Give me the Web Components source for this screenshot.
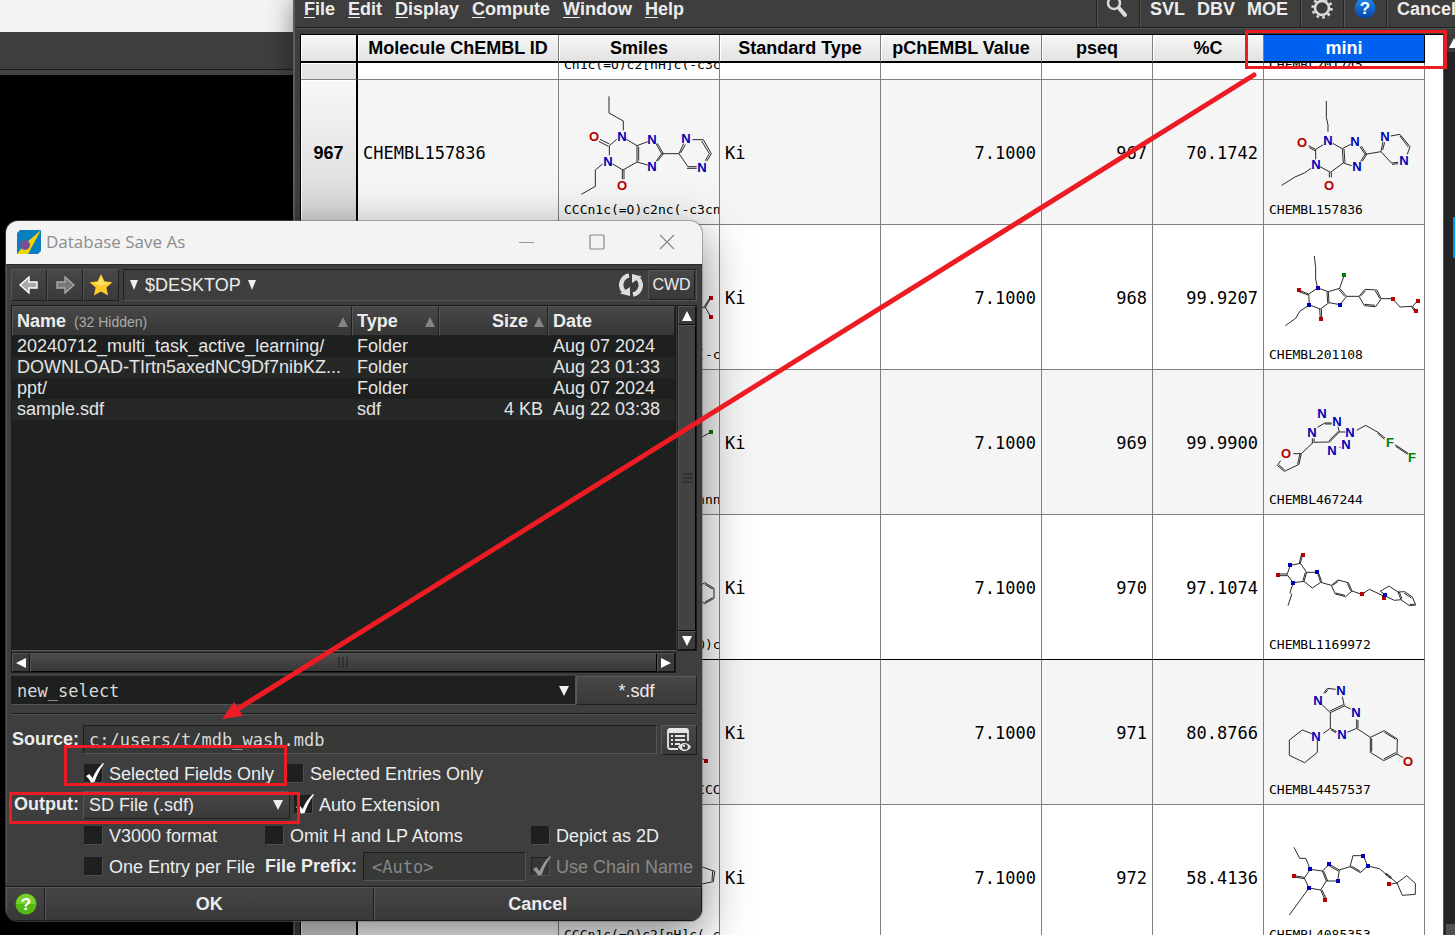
<!DOCTYPE html>
<html lang="en">
<head>
<meta charset="utf-8">
<title>Database Viewer</title>
<style>
  html, body { height: 100%; margin: 0; }
  body { overflow: hidden; background: #000; font-family: "Liberation Sans", Arial, sans-serif; font-size: 18px; }
</style>
</head>
<body>
<moe-desktop>
  <back-window></back-window>
  <moe-window>
    <menu-bar slot="menu"></menu-bar>
    <chem-table></chem-table>
  </moe-window>
  <save-dialog heading="Database Save As">
    <file-list></file-list>
    <save-form slot="form"></save-form>
  </save-dialog>
  <mark-layer></mark-layer>
</moe-desktop>

<script>
const define = (name, html, setup) => {
  const tpl = document.createElement('template');
  tpl.innerHTML = html;
  customElements.define(name, class extends HTMLElement {
    connectedCallback() {
      if (this.shadowRoot) return;
      const root = this.attachShadow({ mode: 'open' });
      root.append(tpl.content.cloneNode(true));
      if (setup) setup(root, this);
    }
  });
};

/* ---------- molecule drawings: bonds and atoms in thirds of a pixel ---------- */
const MOLS = {
  s967: { o: [12, 60],
    b: 'M162 109V159L205 183V211M185 238L163 257V286M135 238L163 252M131 244L160 259M143 312L121 330V379L79 403M173 312L204 330L246 306V257L214 238M251 302V260M202 330V358M207 330V358M246 257L278 245M303 251L320 281L303 304M307 250L325 281L308 303M278 315L246 306M320 281H372L386 251M377 279L391 254M412 239H445L469 281L455 304M440 243L463 281L451 302M425 320H399L372 281M425 325H396',
    a: 'O118,229 N200,228 N158,303 O202,376 N291,237 N291,318 N393,235 N441,321' },
  m967: { o: [642, 240],
    b: 'M829 303V352L834 375V395M775 437L797 448L820 434M778 443L797 453M797 448V478M783 505L763 519L735 531L695 556M810 500L841 517L880 489L877 446L848 430M882 447L885 488M838 517V532M844 517V532M877 446L902 433M930 440L945 463L932 484M934 438L950 463L937 484M905 497L880 489M945 463L993 455L999 425M998 450L1004 427M1022 408L1050 403L1080 440L1072 463M1050 408L1075 441M1044 487L1024 489L993 455M1044 491L1026 493',
    a: 'O757,427 N834,421 N798,492 O838,556 N915,423 N921,499 N1005,408 N1063,481' },
  m968: { o: [12, -15],
    b: 'M163 78L167 113V148L173 174L205 185M117 181L146 192L173 174M117 185L144 195M146 192L148 225L181 237L207 218L205 185L239 175L260 199L240 224L207 218M203 218L201 186M237 179L255 200M239 175L253 134M179 237L181 266M184 237L185 266M148 225L119 244L107 265L76 287M260 199H297L315 178L350 180L364 206L347 230L313 227L297 199M301 199L317 182M346 183L360 206M345 226L314 223M364 206H398L420 231L458 229L473 212M458 229L469 243M455 231L465 245',
    a: 'b173,174 r117,181 b148,225 b240,225 g253,134 r183,266 r398,206 r473,212 r469,243' },
  m969: { o: [12, 420],
    b: 'M172 592L195 579H215M195 582H215M157 625V640M162 625V637L209 636L238 606L234 590M207 633L235 604M238 606H256M238 652h3M290 601L317 586L354 607L375 624M352 609L373 628M405 644L445 670M407 649L443 673M160 637L124 671H100M124 671L117 703L73 724L52 706L62 692M120 671L113 702M74 720L57 705',
    a: 'N186,549 N231,573 N156,607 N270,607 N258,643 N216,659 O79,670 F389,636 F457,682' },
  m970: { o: [12, -15],
    b: 'M91 136L121 130L128 104M118 129L124 104M121 130L140 157H172L182 187L157 204L132 184L140 157M136 157L129 182M176 160L185 185M132 184L100 188L81 164L91 136M81 162H54M81 167H54M100 188L90 217L95 224L84 257M182 187L214 196L234 180L265 188L276 213L257 230L226 222L214 196M218 196L235 184M262 190L272 212M255 226L227 219M276 213L305 223L328 208L371 228M376 224L361 214L387 198L414 216L423 239L403 241L376 228M414 216L434 215L457 231L467 255L448 257L423 239M432 219L454 234M449 253H464M418 216L426 236',
    a: 'b91,136 r128,104 b172,157 r54,166 b100,188 r305,223 r371,234 b376,224' },
  m971: { o: [12, 420],
    b: 'M227 508L202 505L191 520M204 509L195 520M187 555L211 578L253 558L247 530M210 573L250 554M253 558L272 567M211 578V625L190 640M211 625L230 635M213 630L228 638M262 637L290 625V598M294 625V600M290 625L331 652L373 632L412 657L411 702L371 722L331 697V652M335 655V695M373 637L408 658M407 698L371 717M411 702L430 713M155 641L127 630L88 660V706L134 728L172 697V663',
    a: 'N244,511 N175,541 N288,577 N246,643 N169,648 O445,724' },
  m972: { o: [12, 15],
    b: 'M102 142L119 175H137L151 208L187 213L208 193L238 210L233 243H199L187 213M191 213L203 243M208 198L235 213M199 243L182 270L147 264L133 234L151 208M133 232L102 227M133 236L102 231M182 270L195 299M186 270L199 297M147 264L88 345M238 210L270 200L279 167H310L323 198L301 218L270 200M274 198L301 214M323 198L358 206L411 249L386 253M378 220L395 232M375 222L392 236M411 249L440 227L466 250V283L427 286L411 249',
    a: 'b151,208 b208,193 b233,243 b147,264 r102,229 r195,299 b310,167 b323,198 r386,253' },
  s968: { o: [-303, -105], b: 'M110 142H136L153 113M136 142L153 172M133 140L150 113', a: 'r153,113 r153,172' },
  s969: { o: [-303, 330], b: 'M110 540L153 516', a: 'g153,516' },
  s970: { o: [-303, 765], b: 'M110 985L134 968L162 985V1015L134 1031L110 1015M134 973L158 987M158 1013L134 1027', a: '' },
  s971: { o: [627, 90], b: 'M1040 378L1067 391', a: 'r1068,393' },
  s972: { o: [627, 525], b: 'M1040 712L1060 712L1094 724L1090 755L1055 762L1040 750M1088 724L1086 753', a: '' }
};
const COLOR = { N: '#0000b4', O: '#b40000', F: '#008000', b: '#0000b4', r: '#b40000', g: '#008000' };

define('mol-figure', `
<style>
  :host { display: block; width: 160px; height: 144px; }
  svg { display: block; }
  path { fill: none; stroke: #2a2a2a; stroke-width: 3; }
  text { font: bold 13px "Liberation Sans", Arial, sans-serif; text-anchor: middle; }
</style>
<svg width="160" height="144" aria-hidden="true"></svg>`, (root, el) => {
  const m = MOLS[el.getAttribute('name')];
  if (!m) return;
  const [ox, oy] = m.o;
  let out = `<g transform="scale(.33333) translate(${-ox} ${-oy})"><path d="${m.b}"/></g>`;
  for (const t of m.a.split(' ').filter(Boolean)) {
    const k = t[0], [x, y] = t.slice(1).split(',').map(Number);
    const px = Math.round((x - ox) / 3), py = Math.round((y - oy) / 3);
    out += k < 'a'
      ? `<text x="${px}" y="${py + 5}" fill="${COLOR[k]}">${k}</text>`
      : `<rect x="${px - 2}" y="${py - 2}" width="4" height="4" fill="${COLOR[k]}"/>`;
  }
  root.querySelector('svg').innerHTML = out;
});

/* ---------- desktop and windows ---------- */
define('moe-desktop', `
<style>
  :host { display: block; position: relative; width: 100%; height: 100vh; overflow: hidden; background: #000; }
</style><slot></slot>`);

define('back-window', `
<style>
  :host { display: block; width: 100%; }
  .cap { height: 32px; background: #f3f3f3; }
  .bar { height: 37px; background: #3e3e3e; border-bottom: 1px solid #1d1d1d; }
  .gap { height: 5px; background: #444; }
</style><div class="cap"></div><div class="bar"></div><div class="gap"></div>`);

define('moe-window', `
<style>
  :host { position: absolute; left: 293px; right: 0; top: 0; bottom: 0; display: flex; flex-direction: column;
    background: #3e3e3e; border-left: 2px solid #5c5c5c; box-shadow: 0 0 24px rgba(0,0,0,.45); }
  .body { flex: 1; min-height: 0; display: flex; padding: 5px 0 0 5px; }
  .frame { flex: 1; min-width: 0; overflow: hidden; background: #fff; border: solid #000; border-width: 1px 0 0 1px; }
  .scroll { width: 12px; background: #242424; overflow: hidden; border-left: 1px solid #555; box-sizing: border-box; display: flex; flex-direction: column; }
  .up { height: 18px; background: #3a3a3a; }
  .thumb { height: 41px; width: 2px; background: #0090f0; margin: 165px 0 auto auto; }
  .down { height: 11px; background: #505050; margin-left: 2px; }
  svg { display: block; }
</style>
<slot name="menu"></slot>
<div class="body"><div class="frame"><slot></slot></div>
<div class="scroll"><div class="up"><svg width="16" height="18"><path d="M5 14L10 4l5 10z" fill="#fff"/></svg></div><div class="thumb"></div><div class="down"></div></div></div>`);

define('menu-bar', `
<style>
  :host { display: flex; height: 27px; border-bottom: 1px solid #1d1d1d; box-shadow: 0 1px #555; margin-bottom: 1px;
    background: #3e3e3e; font-weight: bold; line-height: 18px; overflow: hidden; white-space: nowrap; }
  nav { display: flex; gap: 13px; padding-left: 9px; flex: 1; }
  a { color: #ececec; text-decoration: none; }
  u { text-underline-offset: 2px; text-decoration-thickness: 1px; }
  .cell { display: flex; align-items: flex-start; gap: 12px; padding: 0 11px 0 10px; border-left: 1px solid #222; box-shadow: inset 1px 0 #555; }
  .icon { padding: 0; width: 43px; justify-content: center; box-sizing: border-box; }
  .last { width: 69px; box-sizing: border-box; padding: 0 0 0 10px; overflow: hidden; }
  .cell + .cell:not(.icon):not(.last) { padding-right: 12px; }
  button { all: unset; color: #ececec; }
  svg { display: block; }
</style>
<nav><a href="#file"><u>F</u>ile</a><a href="#edit"><u>E</u>dit</a><a href="#display"><u>D</u>isplay</a><a href="#compute"><u>C</u>ompute</a><a href="#window"><u>W</u>indow</a><a href="#help"><u>H</u>elp</a></nav>
<div class="cell icon"><button aria-label="Search"><svg width="24" height="20" viewBox="0 0 24 20"><circle cx="8" cy="3" r="6" fill="none" stroke="#ddd" stroke-width="2.4"/><path d="M13 8l6 7" stroke="#ddd" stroke-width="4" stroke-linecap="round"/></svg></button></div>
<div class="cell"><button>SVL</button><button>DBV</button><button>MOE</button></div>
<div class="cell icon"><button aria-label="Settings"><svg width="24" height="20" viewBox="0 0 24 20"><circle cx="12" cy="8" r="7" fill="none" stroke="#ddd" stroke-width="2.6"/><circle cx="12" cy="8" r="9.4" fill="none" stroke="#ddd" stroke-width="2.6" stroke-dasharray="2.6 3.3"/></svg></button></div>
<div class="cell icon"><button aria-label="Help"><svg width="22" height="20" viewBox="0 0 22 20"><defs><linearGradient id="g" x2="0" y2="1"><stop stop-color="#1d8df0"/><stop offset="1" stop-color="#0544a8"/></linearGradient></defs><circle cx="11" cy="8" r="10.4" fill="url(#g)"/><text x="11" y="14" text-anchor="middle" fill="#fff" font-size="17">?</text></svg></button></div>
<div class="cell last"><button>Cancel</button></div>`);

/* ---------- database table ---------- */
const ROWS = [
  ['', '', '', 'Cn1c(=O)c2[nH]c(-c3ccc', '', '', '', '', 'CHEMBL201745', ''],
  [967, 'CHEMBL157836', 's967', 'CCCn1c(=O)c2nc(-c3cnccn3)', 'Ki', '7.1000', '967', '70.1742', 'CHEMBL157836', 'm967'],
  [968, 'CHEMBL201108', 's968', 'CCCn1c(=O)c2[nH]c(-c3ccc', 'Ki', '7.1000', '968', '99.9207', 'CHEMBL201108', 'm968'],
  [969, 'CHEMBL467244', 's969', 'Nc1nc(-c2ccco2)c2nnnn2CC', 'Ki', '7.1000', '969', '99.9900', 'CHEMBL467244', 'm969'],
  [970, 'CHEMBL1169972', 's970', 'CCCn1c(=O)[nH]c(=O)c2c1', 'Ki', '7.1000', '970', '97.1074', 'CHEMBL1169972', 'm970'],
  [971, 'CHEMBL4457537', 's971', 'Oc1ccc(-c2nc(N3CCCCC3)c3', 'Ki', '7.1000', '971', '80.8766', 'CHEMBL4457537', 'm971'],
  [972, 'CHEMBL4085353', 's972', 'CCCn1c(=O)c2[nH]c(-c3cn', 'Ki', '7.1000', '972', '58.4136', 'CHEMBL4085353', 'm972']
];
define('chem-table', `
<style>
  :host { display: block; color: #000; }
  table { border-collapse: separate; border-spacing: 0; table-layout: fixed; width: 1124px; }
  th, td { padding: 0; border: 0 solid #808080; border-width: 0 1px 1px 0; box-sizing: border-box; overflow: hidden; white-space: nowrap; }
  thead th { height: 28px; line-height: 26px; padding-top: 1px; border-bottom: 2px solid #000; background: linear-gradient(#f7f7f7, #e2e2e2); box-shadow: inset 1px 1px #fff; }
  thead th { line-height: 25px; }
  thead th.sel { background: #0060f0; color: #fff; border-right-color: #000; box-shadow: none; }
  th:first-child { border-right: 2px solid #000; }
  tbody th { padding-top: 2px; background: linear-gradient(#f8f8f8, #d6d6d6); box-shadow: inset 1px 1px #fff; }
  tbody tr { height: 145px; }
  tbody tr.cut { height: 17px; }
  tbody tr.cut th { background: #e4e4e4; }
  tbody tr:nth-child(even) td { background: #f5f5f5; }
  tbody tr.group th ~ td { border-bottom-color: #000; }
  td { font: 17px/20px "DejaVu Sans Mono", monospace; padding: 1px 5px 0; }
  td.num { text-align: right; }
  td.mol { padding: 0; }
  .pic { display: grid; height: 144px; overflow: hidden; }
  .cut .pic { height: 16px; }
  .pic > * { grid-area: 1 / 1; }
  .pic span { align-self: end; padding: 0 0 7px 5px; font-size: 13px; line-height: 15px; overflow: hidden; }
  .cut .pic { display: flex; align-items: flex-end; }
</style>
<table>
  <colgroup><col style="width:57px"><col style="width:201px"><col style="width:161px"><col style="width:161px"><col style="width:161px"><col style="width:111px"><col style="width:111px"><col style="width:161px"></colgroup>
  <thead><tr><th></th><th>Molecule ChEMBL ID</th><th>Smiles</th><th>Standard Type</th><th>pChEMBL Value</th><th>pseq</th><th>%C</th><th class="sel">mini</th></tr></thead>
  <tbody></tbody>
</table>`, root => {
  const pic = (mol, text) => `<td class="mol"><div class="pic">${mol ? `<mol-figure name="${mol}"></mol-figure>` : ''}<span>${text}</span></div></td>`;
  root.querySelector('tbody').innerHTML = ROWS.map(r =>
    `<tr class="${r[0] ? (r[0] === 970 ? 'group' : '') : 'cut'}"><th>${r[0]}</th><td>${r[1]}</td>${pic(r[2], r[3])}<td>${r[4]}</td><td class="num">${r[5]}</td><td class="num">${r[6]}</td><td class="num">${r[7]}</td>${pic(r[9], r[8])}</tr>`).join('');
});

/* ---------- save dialog ---------- */
define('save-dialog', `
<style>
  :host { position: absolute; left: 6px; top: 221px; width: 696px; display: flex; flex-direction: column; box-sizing: border-box;
    border-radius: 12px; overflow: hidden; background: #3e3e3e; color: #ececec;
    box-shadow: 0 0 0 1px rgba(110,110,110,.5), 0 14px 48px rgba(0,0,0,.5); }
  header { height: 43px; display: flex; align-items: center; background: #f3f3f3; padding-left: 11px; }
  h1 { flex: 1; margin: 0 0 2px 5px; font: 17px/24px "Open Sans", sans-serif; color: #8c8c8c; }
  header button { all: unset; width: 70px; margin-bottom: 2px; display: grid; place-items: center; }
  header > svg { margin-bottom: 2px; }
  svg { display: block; }
  main { border-left: 1px solid #555; border-top: 1px solid #2a2a2a; padding: 4px 5px 0 4px; }
  .tools { display: flex; height: 32px; margin-bottom: 4px; }
  .tools > button, .cwd { all: unset; box-sizing: border-box; width: 36px; display: grid; place-items: center;
    background: linear-gradient(#474747, #3a3a3a); border: 1px solid; border-color: #555 #1f1f1f #1f1f1f #555; }
  .path { flex: 1; margin-left: 4px; display: flex; align-items: center; gap: 7px; padding: 0 1px 0 6px; border: 1px solid; border-color: #1f1f1f #555 #555 #1f1f1f; box-sizing: border-box; }
  .path i { flex: 1; }
  .path .cwd { width: 47px; height: 30px; font-size: 16px; margin-left: -2px; }
  footer { display: flex; height: 34px; border-top: 1px solid #1a1a1a; margin-top: 4px; }
  footer button { all: unset; box-sizing: border-box; flex: 1; text-align: center; font-weight: bold; line-height: 32px;
    background: linear-gradient(#454545, #383838); border: 1px solid; border-color: #5a5a5a #1a1a1a #1a1a1a #5a5a5a; }
  footer .help { flex: none; width: 39px; display: grid; place-items: center; }
</style>
<header>
  <svg width="24" height="24" viewBox="0 0 24 24"><path d="M3 0h21v21l-3 3H0V3z" fill="#0a7fc0"/><path d="M24 0L11 24H0l8-10z" fill="#f5d400"/><circle cx="8" cy="15" r="5" fill="#775099"/></svg>
  <h1></h1>
  <button aria-label="Minimize"><svg width="16" height="16"><path d="M0 8.500h15" stroke="#999"/></svg></button>
  <button aria-label="Maximize"><svg width="16" height="16"><rect x="1" y="1" width="14" height="14" rx="1" fill="none" stroke="#888" stroke-width="1.2"/></svg></button>
  <button aria-label="Close"><svg width="16" height="16"><path d="M1 1l14 14M15 1L1 15" stroke="#888" stroke-width="1.2"/></svg></button>
</header>
<main>
  <div class="tools">
    <button aria-label="Back"><svg width="20" height="18"><path d="M1 9l9-8v5h8v6h-8v5z" fill="#aaa" stroke="#fff" stroke-width="1.4"/></svg></button>
    <button aria-label="Forward"><svg width="20" height="18"><path d="M19 9l-9-8v5H2v6h8v5z" fill="#777" stroke="#aaa" stroke-width="1.4"/></svg></button>
    <button aria-label="Favorites"><svg width="24" height="24" viewBox="0 0 24 24"><path d="M12 1l3.400 7.300 8 .9-6 5.400 1.700 7.900L12 18.500l-7.100 4 1.700-7.900-6-5.400 8-.9z" fill="#ffc928"/><path d="M12 3l2.600 6.200 6.400.8-9 2.500-8.500-2.500 6-.8z" fill="#ffe169"/></svg></button>
    <div class="path"><svg width="8" height="10"><path d="M0 0h8L4 10z" fill="#eee"/></svg><span>$DESKTOP</span><svg width="8" height="10"><path d="M0 0h8L4 10z" fill="#eee"/></svg><i></i>
      <svg width="24" height="24" viewBox="0 0 24 24"><path d="M10 2.500A9.500 9.500 0 0 0 5 18.500M14 21.500A9.500 9.500 0 0 0 19 5.500" fill="none" stroke="#ddd" stroke-width="4.400"/><path d="M1 20.500l10 2.500V14zM23 3.500L13 1v9z" fill="#ddd"/></svg>
      <button class="cwd">CWD</button></div>
  </div>
  <slot></slot>
  <slot name="form"></slot>
</main>
<footer><button class="help" aria-label="Help"><svg width="22" height="22"><circle cx="11" cy="11" r="10.500" fill="#55b813"/><path d="M1 11a10 10 0 0 1 20 0z" fill="#79cf2e"/><text x="11" y="17" text-anchor="middle" font-size="17" fill="#fff">?</text></svg></button><button>OK</button><button>Cancel</button></footer>`,
  (root, el) => { root.querySelector('h1').textContent = el.getAttribute('heading'); });

define('file-list', `
<style>
  :host { display: grid; grid-template-columns: 1fr 20px; grid-template-rows: 346px 22px; column-gap: 1px; }
  .list { background: #1e2020; border: 1px solid #1a1a1a; border-bottom-color: #555; box-sizing: border-box; overflow: hidden; }
  table { width: 100%; border-collapse: separate; border-spacing: 0; table-layout: fixed; }
  th { height: 30px; padding: 1px 4px 0; box-sizing: border-box; background: linear-gradient(#484848, #363636); border: 1px solid; border-color: #555 #1f1f1f #222 #555; text-align: left; }
  th div { display: flex; align-items: center; gap: 6px; }
  th.n { text-align: right; }
  th.n div { justify-content: flex-end; }
  th small { font-size: 14px; font-weight: normal; color: #aaa; margin-left: 2px; }
  th i { flex: 1; }
  th svg { flex: none; margin-right: -1px; }
  td { height: 21px; line-height: 21px; padding: 0 5px; white-space: nowrap; overflow: hidden; color: #e4e4e4; }
  td.n { text-align: right; }
  tr:nth-child(even) td { background: #262828; }
  .v, .h { display: flex; border: 1px solid #1a1a1a; box-sizing: border-box; }
  .v { flex-direction: column; }
  .h { margin-top: 1px; height: 21px; }
  button { all: unset; box-sizing: border-box; width: 18px; height: 19px; display: grid; place-items: center; flex: none; background: #3c3c3c; border: 1px solid; border-color: #555 #111 #111 #555; }
  .t { flex: 1; background: #424242; border: 1px solid; border-color: #555 #000 #000 #555; display: grid; place-items: center; }
  .h .t { background: linear-gradient(#4c4c4c, #383838); }
  svg { display: block; }
</style>
<div class="list"><table>
  <colgroup><col><col style="width:87px"><col style="width:109px"><col style="width:127px"></colgroup>
  <thead><tr>
    <th><div>Name <small>(32 Hidden)</small><i></i><svg width="10" height="10"><path d="M0 10h10L5 0z" fill="#858585"/></svg></div></th>
    <th><div>Type<i></i><svg width="10" height="10"><path d="M0 10h10L5 0z" fill="#858585"/></svg></div></th>
    <th class="n"><div>Size<svg width="10" height="10"><path d="M0 10h10L5 0z" fill="#858585"/></svg></div></th>
    <th>Date</th></tr></thead>
  <tbody>
    <tr><td>20240712_multi_task_active_learning/</td><td>Folder</td><td></td><td>Aug 07 2024</td></tr>
    <tr><td>DOWNLOAD-TIrtn5axedNC9Df7nibKZ...</td><td>Folder</td><td></td><td>Aug 23 01:33</td></tr>
    <tr><td>ppt/</td><td>Folder</td><td></td><td>Aug 07 2024</td></tr>
    <tr><td>sample.sdf</td><td>sdf</td><td class="n">4 KB</td><td>Aug 22 03:38</td></tr>
  </tbody></table></div>
<div class="v"><button aria-label="Scroll up"><svg width="10" height="10"><path d="M0 10h10L5 0z" fill="#fff"/></svg></button>
  <div class="t"><svg width="11" height="11"><path d="M0 1h11M0 5h11M0 9h11" stroke="#222"/></svg></div>
  <button aria-label="Scroll down"><svg width="10" height="10"><path d="M0 0h10L5 10z" fill="#fff"/></svg></button></div>
<div class="h"><button aria-label="Scroll left"><svg width="10" height="10"><path d="M10 0v10L0 5z" fill="#fff"/></svg></button>
  <div class="t"><svg width="11" height="11"><path d="M1 0v11M5 0v11M9 0v11" stroke="#222"/></svg></div>
  <button aria-label="Scroll right"><svg width="10" height="10"><path d="M0 0v10L10 5z" fill="#fff"/></svg></button></div>`);

define('check-box', `
<style>
  :host { display: block; }
  label { display: flex; align-items: center; gap: 6px; position: relative; white-space: nowrap; line-height: 20px; }
  input { appearance: none; margin: 0; width: 19px; height: 19px; box-sizing: border-box; background: #1e2020; border: 1px solid; border-color: #1e2020 #505050 #505050 #1e2020; }
  svg { position: absolute; left: 2px; bottom: 1px; display: none; fill: #fff; }
  input:checked + svg { display: block; }
  :host([muted]) label { color: #888; }
  :host([muted]) svg { fill: #999; }
  :host([muted]) input { background: #363636; border-color: #222 #505050 #505050 #222; }
</style>
<label><input type="checkbox"><svg width="20" height="20" viewBox="0 0 20 20"><path d="M0 13l3.500-2 3 4.200C9 9 13 3.500 17 0l1 .8C13.500 7 10.500 13 8.600 19l-3.600.4C3.800 17 2 14.800 0 13z"/></svg><span><slot></slot></span></label>`,
  (root, el) => {
    const box = root.querySelector('input');
    box.checked = el.hasAttribute('checked');
    box.disabled = el.hasAttribute('muted');
  });

define('save-form', `
<style>
  :host { display: block; }
  .row { display: flex; align-items: center; height: 31px; }
  .row > label { font-weight: bold; }
  .sunk { flex: 1; min-width: 0; display: flex; align-items: center; height: 29px; box-sizing: border-box; border: 1px solid; border-color: #1c1c1c #555 #555 #1c1c1c; background: #373937; }
  input { all: unset; flex: 1; min-width: 0; padding: 0 5px; font: 17px/24px "DejaVu Sans Mono", monospace; color: #d8d8d8; }
  input::placeholder { color: #888; opacity: 1; }
  .name { display: flex; margin-top: 3px; padding-bottom: 8px; border-bottom: 1px solid #1c1c1c; box-shadow: 0 1px #555; }
  .name .sunk { background: #1e2020; padding-right: 6px; }
  button { all: unset; box-sizing: border-box; width: 121px; text-align: center; line-height: 26px; border: 1px solid; border-color: #5a5a5a #1f1f1f #1f1f1f #5a5a5a; background: linear-gradient(#474747, #3a3a3a); }
  .row button { width: 36px; height: 30px; display: grid; place-items: center; }
  .src { margin: 10px 0 3px; }
  .src label, .out label { width: 72px; text-align: right; padding-right: 4px; box-sizing: border-box; white-space: nowrap; }
  .src .sunk { flex: 1; margin-right: 4px; }
  .in { padding-left: 73px; }
  .wide { width: 201px; } .mid { width: 181px; } .far { width: 266px; }
  .pick { display: grid; align-items: center; width: 207px; margin-right: 4px; }
  .pick > * { grid-area: 1 / 1; }
  .pick svg { justify-self: end; margin-right: 7px; pointer-events: none; }
  select { appearance: none; width: 100%; height: 28px; padding: 0 5px; font: inherit; color: inherit; border-radius: 0; border: 1px solid; border-color: #555 #1f1f1f #1f1f1f #555; background: linear-gradient(#474747, #3a3a3a); }
  .pre { flex: none; width: 163px; margin: 0 5px 0 6px; }
  .pre input { padding-left: 8px; }
  svg { display: block; }
</style>
<div class="name"><div class="sunk"><input aria-label="File name" value="new_select"><svg width="10" height="10"><path d="M0 0h10L5 10z" fill="#eee"/></svg></div><button>*.sdf</button></div>
<div class="row src"><label for="src">Source:</label><div class="sunk"><input id="src" value="c:/users/t/mdb_wash.mdb"></div>
  <button aria-label="Browse fields"><svg width="24" height="24" viewBox="0 0 24 24"><path d="M11 21H3a2 2 0 0 1-2-2V3a2 2 0 0 1 2-2h16a2 2 0 0 1 2 2v10" fill="none" stroke="#e6e6e6" stroke-width="1.800"/><path d="M1 2h20v3H1z" fill="#e6e6e6"/><path d="M4 8h2M4 12h2M4 16h2M8 8h10M8 12h10M8 16h5" stroke="#e6e6e6" stroke-width="2"/><path d="M11 19c3-5.500 10-5.500 13 0-3 5.500-10 5.500-13 0z" fill="#e6e6e6"/><circle cx="18" cy="19" r="2.800" fill="#3a3a3a"/><circle cx="17" cy="18" r="1" fill="#fff"/></svg></button></div>
<div class="row in"><check-box class="wide" checked>Selected Fields Only</check-box><check-box>Selected Entries Only</check-box></div>
<div class="row out"><label for="fmt">Output:</label><div class="pick"><select id="fmt"><option>SD File (.sdf)</option></select><svg width="10" height="10"><path d="M0 0h10L5 10z" fill="#eee"/></svg></div><check-box checked>Auto Extension</check-box></div>
<div class="row in"><check-box class="mid">V3000 format</check-box><check-box class="far">Omit H and LP Atoms</check-box><check-box>Depict as 2D</check-box></div>
<div class="row in"><check-box class="mid">One Entry per File</check-box><label for="pre">File Prefix:</label><div class="sunk pre"><input id="pre" placeholder="&lt;Auto&gt;"></div><check-box muted checked>Use Chain Name</check-box></div>`);

/* ---------- red call-outs over the windows ---------- */
define('mark-layer', `
<style>
  :host { position: absolute; inset: 0; pointer-events: none; }
  svg { display: block; width: 100%; height: 100%; }
</style>
<svg aria-hidden="true"><g fill="none" stroke="#ed1c24" stroke-width="3">
  <rect x="1246.500" y="31.500" width="199" height="36"/><rect x="65.500" y="746.500" width="220" height="38"/><rect x="10.500" y="793.500" width="288" height="29"/>
  <path d="M1254 75L236 710" stroke-width="5" stroke-linecap="round"/></g>
  <path d="M222 719L234 702L243 716z" fill="#ed1c24"/></svg>`);
</script>
</body>
</html>
